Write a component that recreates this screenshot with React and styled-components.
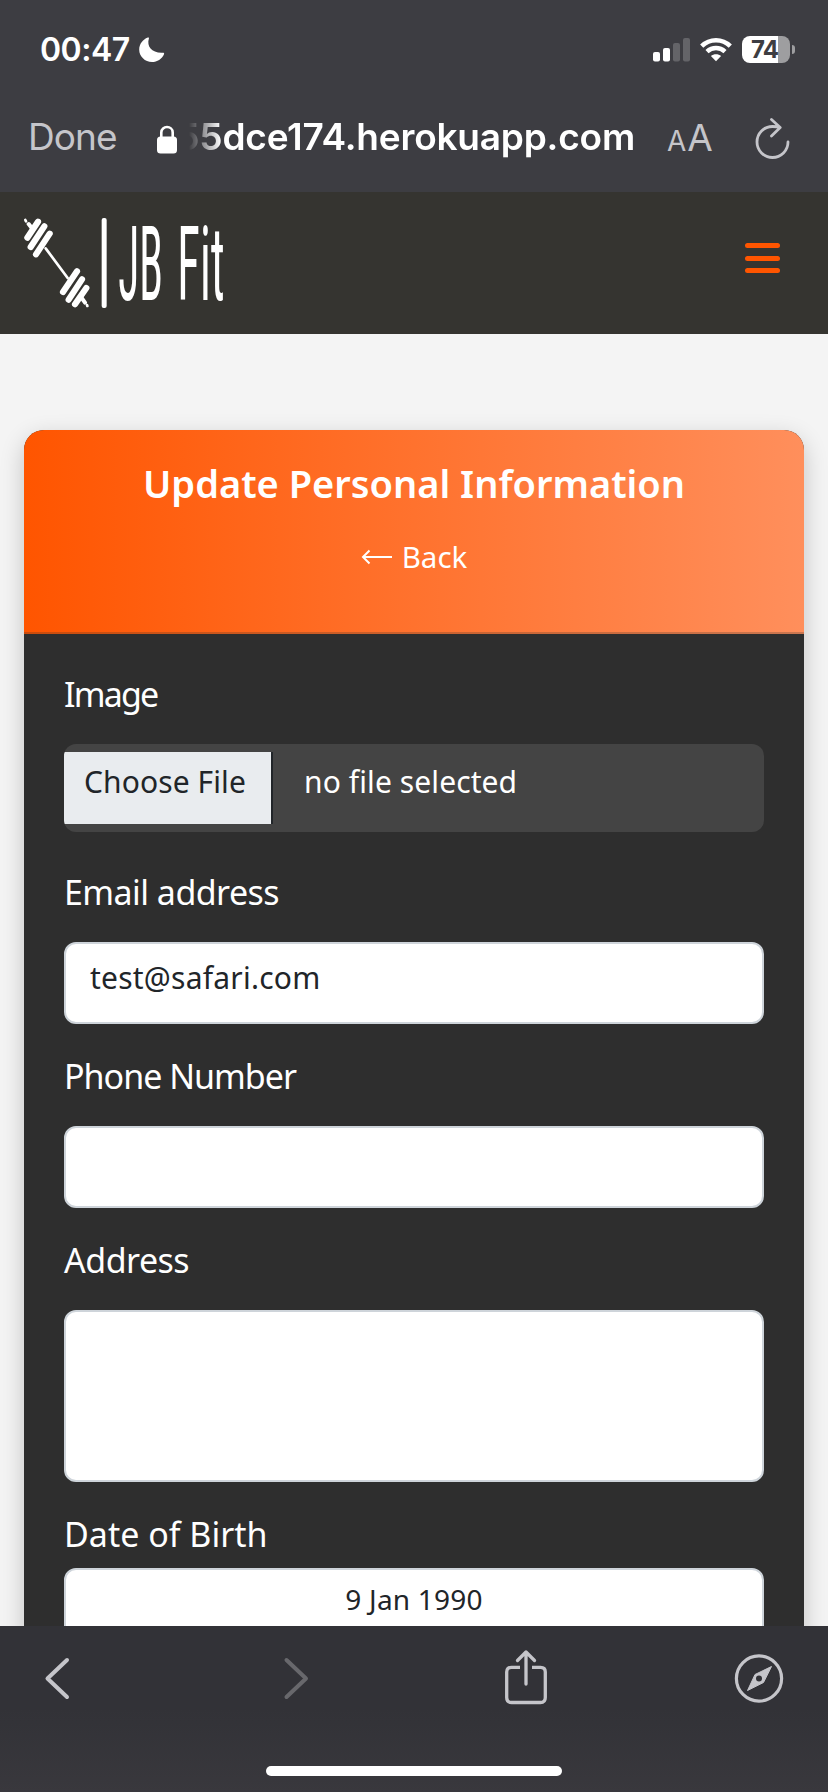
import React from "react";
import styled, { createGlobalStyle } from "styled-components";

const GlobalStyle = createGlobalStyle`
  *, *::before, *::after { box-sizing: border-box; }
  html, body { margin: 0; padding: 0; background: #f4f4f4; }
  body { overflow: hidden; }
`;

const systemFont = `Inter, "Liberation Sans", sans-serif`;
const siteFont = `"Noto Sans", "Open Sans", sans-serif`;

const Screen = styled.div`
  width: 828px;
  height: 1792px;
  display: flex;
  flex-direction: column;
  overflow: hidden;
  background: #f4f4f4;
  font-family: ${siteFont};
`;

const Chrome = styled.header`
  flex: none;
  height: 192px;
  background: #3d3d42;
  color: #fff;
  font-family: ${systemFont};
`;

const StatusBar = styled.div`
  height: 99px;
  padding: 0 33px 0 40px;
  display: flex;
  align-items: center;
`;

const Clock = styled.span`
  width: 99px;
  font-size: 32px;
  font-weight: 600;
  letter-spacing: -0.5px;
  line-height: 40px;
  white-space: nowrap;
`;

const StatusIcons = styled.div`
  margin-left: auto;
  display: flex;
  align-items: center;
  gap: 10px;
`;

const Battery = styled.div`
  width: 48px;
  height: 27px;
  border-radius: 8px;
  background: linear-gradient(90deg, #fff 75%, #9e9ea0 75%);
  color: #3d3d42;
  font-size: 24px;
  font-weight: 700;
  line-height: 27px;
  letter-spacing: -0.8px;
  padding-left: 9px;
`;

const BatteryGroup = styled.div`
  display: flex;
  align-items: center;
  gap: 2px;
`;

const BatteryNub = styled.div`
  width: 3px;
  height: 9px;
  border-radius: 0 4px 4px 0;
  background: #9e9ea0;
`;

const AddressBar = styled.div`
  height: 80px;
  padding-left: 28px;
  display: flex;
  align-items: center;
`;

const Done = styled.span`
  width: 129px;
  padding-bottom: 4px;
  color: #c5c5ca;
  font-size: 37px;
  line-height: 44px;
  letter-spacing: -0.9px;
`;

const Url = styled.div`
  width: 446px;
  margin: 0 32px 0 12px;
  padding-bottom: 4px;
  display: flex;
  justify-content: flex-end;
  overflow: hidden;
  font-size: 37px;
  font-weight: 600;
  line-height: 44px;
  letter-spacing: -0.2px;
  white-space: nowrap;
  mask-image: linear-gradient(90deg, transparent 0, #000 32px);
`;

const TextSize = styled.span`
  width: 88px;
  display: flex;
  align-items: baseline;
  gap: 1px;
  color: #c5c5ca;
  font-size: 37px;
  line-height: 44px;
  small { font-size: 28px; }
`;

const SiteHeader = styled.div`
  flex: none;
  height: 142px;
  padding: 0 48px 0 24px;
  display: flex;
  align-items: center;
  justify-content: space-between;
  background: #353430;
`;

const MenuButton = styled.button`
  width: 35px;
  padding: 0;
  margin-bottom: 10px;
  border: 0;
  background: none;
  display: flex;
  flex-direction: column;
  gap: 7.5px;
`;

const MenuLine = styled.span`
  height: 5px;
  border-radius: 3px;
  background: #ff5500;
`;

const Page = styled.main`
  flex: 1;
  min-height: 0;
  overflow: hidden;
  padding: 96px 24px 0;
`;

const Card = styled.section`
  height: 1400px;
  border-radius: 20px;
  overflow: hidden;
  background: #2e2e2e;
  box-shadow: 0 8px 24px rgba(0, 0, 0, 0.2);
`;

const CardHeader = styled.div`
  height: 204px;
  padding-top: 26px;
  display: flex;
  flex-direction: column;
  align-items: center;
  border-bottom: 2px solid rgba(46, 46, 46, 0.25);
  background: linear-gradient(90deg, #ff5500, #ff8f5c) border-box;
  color: #fff;
`;

const Title = styled.h1`
  margin: 0;
  font-size: 38px;
  font-weight: 600;
  line-height: 54px;
  white-space: nowrap;
`;

const BackLink = styled.a`
  margin-top: 25px;
  display: flex;
  align-items: center;
  gap: 9px;
  font-size: 29.5px;
  line-height: 44px;
`;

const Form = styled.form`
  padding: 36px 40px 0;
`;

const Field = styled.div`
  display: flex;
  flex-direction: column;
  margin-bottom: ${(p) => p.$after || 28}px;
`;

const Label = styled.label`
  height: 48px;
  margin-bottom: ${(p) => (p.$gap === undefined ? 26 : p.$gap)}px;
  color: #fff;
  font-size: 34px;
  line-height: 48px;
  letter-spacing: ${(p) => p.$track || 0}px;
  white-space: nowrap;
`;

const FilePicker = styled.div`
  height: 88px;
  display: flex;
  align-items: center;
  border-radius: 12px;
  background: #444;
  color: #fff;
  font-size: 30px;
  letter-spacing: 0.1px;
  overflow: hidden;
`;

const FileButton = styled.span`
  width: 209px;
  height: 72px;
  padding: 8px 0 0 20px;
  border-right: 2px solid #212529;
  background: #e9ecef;
  color: #212529;
  line-height: 44px;
  white-space: nowrap;
`;

const FileName = styled.span`
  height: 72px;
  padding: 8px 0 0 31px;
  line-height: 44px;
`;

const Control = styled.div`
  height: ${(p) => p.$height || 82}px;
  padding: ${(p) => p.$top || 12}px 24px 0;
  border: 2px solid #ced4da;
  border-radius: 12px;
  background: #fff;
  color: #212529;
  font-size: ${(p) => p.$size || 30}px;
  line-height: 44px;
  letter-spacing: ${(p) => p.$track || 0}px;
  text-align: ${(p) => (p.$centered ? "center" : "left")};
`;

const BottomBar = styled.footer`
  flex: none;
  height: 166px;
  padding: 22px 43px 16px;
  display: flex;
  flex-direction: column;
  align-items: center;
  justify-content: space-between;
  background: linear-gradient(#323237, #323237 50%, #39383d);
`;

const Tools = styled.nav`
  width: 100%;
  display: grid;
  grid-template-columns: 239px 222px 230px 50px;
`;

const HomeIndicator = styled.div`
  width: 296px;
  height: 10px;
  border-radius: 5px;
  background: #fff;
`;

const stroke = { fill: "none", stroke: "#c5c5ca", strokeLinecap: "round", strokeLinejoin: "round" };

const Moon = () => (
  <svg width="26" height="26" viewBox="0 0 26 26">
    <path fill="#fff" d="M8.800 .600C9.700 .200 10.200 .800 9.900 1.600 7.400 9.600 13 16.400 23.800 15.800 24.900 15.700 25.400 16.300 25 17.200 22.900 22.100 18.200 25 13 25 6 25 .200 19.300 .200 12.700 .200 7.200 3.800 2.400 8.800 .600Z" />
  </svg>
);

const Signal = () => (
  <svg width="37" height="24" viewBox="0 0 37 24">
    <rect x="0" y="14" width="7" height="9.500" rx="2" fill="#fff" />
    <rect x="10" y="10" width="7" height="13.500" rx="2" fill="#fff" />
    <rect x="20" y="5" width="7" height="18.500" rx="2" fill="#646468" />
    <rect x="30" y="0" width="7" height="23.500" rx="2" fill="#646468" />
  </svg>
);

const Wifi = () => (
  <svg width="32" height="25" viewBox="0 0 32 25">
    <g fill="none" stroke="#fff" strokeWidth="4.500">
      <path d="M1.700 9.200C9.700 1.300 22.300 1.300 30.300 9.200" />
      <path d="M7 14.600C12.200 9.800 19.800 9.800 25 14.600" />
    </g>
    <path fill="#fff" d="M16 24.200 10.900 19.100C13.600 16.500 18.400 16.500 21.100 19.100Z" />
  </svg>
);

const Lock = () => (
  <svg width="20" height="29" viewBox="0 0 20 29">
    <path d="M4.300 13V7.500C4.300 .2 15.700 .2 15.700 7.500V13" fill="none" stroke="#fff" strokeWidth="2.600" />
    <rect x="0" y="11.500" width="20" height="17" rx="3.500" fill="#fff" />
  </svg>
);

const Reload = () => (
  <svg width="36" height="42" viewBox="0 0 36 42" strokeWidth="2.800" {...stroke}>
    <path d="M33 24A15.500 15.500 0 1 1 17.500 8.500C20 8.500 22.500 8.700 25 9.500M16.500 1.500 25.200 9.500 16.500 18" />
  </svg>
);

const Logo = () => (
  <svg width="200" height="90" viewBox="72 114 600 270" overflow="visible">
    <g stroke="#fff" strokeLinecap="round" fill="none">
      <path strokeWidth="8" d="M137 205 203 294M76 120 78 124M261 375 262 378" />
      <path strokeWidth="12" d="M86 132 96 145M246 355 255 368" />
      <path strokeWidth="18.500" d="M82 173 114 125M92 201 133 139M108 223 149 161M189 336 231 274M206 359 246 298M225 373 259 324" />
    </g>
    <rect x="305" y="114" width="15" height="270" rx="6" fill="#fff" />
    <g fill="#fff" fontFamily="Roboto, sans-serif" fontStretch="75%" fontWeight="400" fontSize="312">
      <text x="355" y="360" textLength="134" lengthAdjust="spacingAndGlyphs">JB</text>
      <text x="532" y="360" textLength="142" lengthAdjust="spacingAndGlyphs">Fit</text>
    </g>
  </svg>
);

const BackArrow = () => (
  <svg width="32" height="16" viewBox="0 0 32 16">
    <path d="M31 8H2M8.500 1.500 2 8 8.500 14.500" fill="none" stroke="#fff" strokeWidth="2" />
  </svg>
);

const Chevron = ({ forward }) => (
  <svg width="28" height="61" viewBox="0 0 28 61" strokeWidth="4" {...stroke} stroke={forward ? "#68686c" : "#c5c5ca"}>
    <path d={forward ? "M4.500 12 24 30.500 4.500 49" : "M24 12 4.500 30.500 24 49"} />
  </svg>
);

const Share = () => (
  <svg width="44" height="61" viewBox="0 0 44 61" strokeWidth="3.300" {...stroke}>
    <path strokeLinecap="butt" d="M16 19.300H7.500Q2.700 19.300 2.700 24V49.500Q2.700 54.500 7.500 54.500H36.500Q41.300 54.500 41.300 49.500V24Q41.300 19.300 36.500 19.300H28" />
    <path d="M22 36V4M13.500 12.500 22 4 30.500 12.500" />
  </svg>
);

const Compass = () => (
  <svg width="50" height="61" viewBox="0 0 50 61">
    <circle cx="25" cy="30.500" r="22.600" fill="none" stroke="#c5c5ca" strokeWidth="3.200" />
    <path fill="#c5c5ca" stroke="#c5c5ca" strokeLinejoin="round" d="M37.500 18.500 29.500 34.500 13.500 42.500 21 26.500Z" />
    <circle cx="25" cy="30.500" r="3" fill="#323237" />
  </svg>
);

export default function App() {
  return (
    <Screen>
      <GlobalStyle />
      <Chrome>
        <StatusBar>
          <Clock>00:47</Clock>
          <Moon />
          <StatusIcons>
            <Signal />
            <Wifi />
            <BatteryGroup>
              <Battery>74</Battery>
              <BatteryNub />
            </BatteryGroup>
          </StatusIcons>
        </StatusBar>
        <AddressBar>
          <Done>Done</Done>
          <Lock />
          <Url>55dce174.herokuapp.com</Url>
          <TextSize><small>A</small>A</TextSize>
          <Reload />
        </AddressBar>
      </Chrome>
      <SiteHeader>
        <Logo />
        <MenuButton aria-label="Menu">
          <MenuLine />
          <MenuLine />
          <MenuLine />
        </MenuButton>
      </SiteHeader>
      <Page>
        <Card>
          <CardHeader>
            <Title>Update Personal Information</Title>
            <BackLink><BackArrow />Back</BackLink>
          </CardHeader>
          <Form>
            <Field $after={36}>
              <Label $gap={26} $track={-1.8}>Image</Label>
              <FilePicker>
                <FileButton>Choose File</FileButton>
                <FileName>no file selected</FileName>
              </FilePicker>
            </Field>
            <Field>
              <Label $track={-0.55}>Email address</Label>
              <Control $track={0.23}>test@safari.com</Control>
            </Field>
            <Field>
              <Label $track={-1}>Phone Number</Label>
              <Control />
            </Field>
            <Field>
              <Label $track={-0.5}>Address</Label>
              <Control $height={172} />
            </Field>
            <Field>
              <Label $gap={10}>Date of Birth</Label>
              <Control $centered $top={7} $size={28} $track={0.2}>9 Jan 1990</Control>
            </Field>
          </Form>
        </Card>
      </Page>
      <BottomBar>
        <Tools>
          <Chevron />
          <Chevron forward />
          <Share />
          <Compass />
        </Tools>
        <HomeIndicator />
      </BottomBar>
    </Screen>
  );
}
